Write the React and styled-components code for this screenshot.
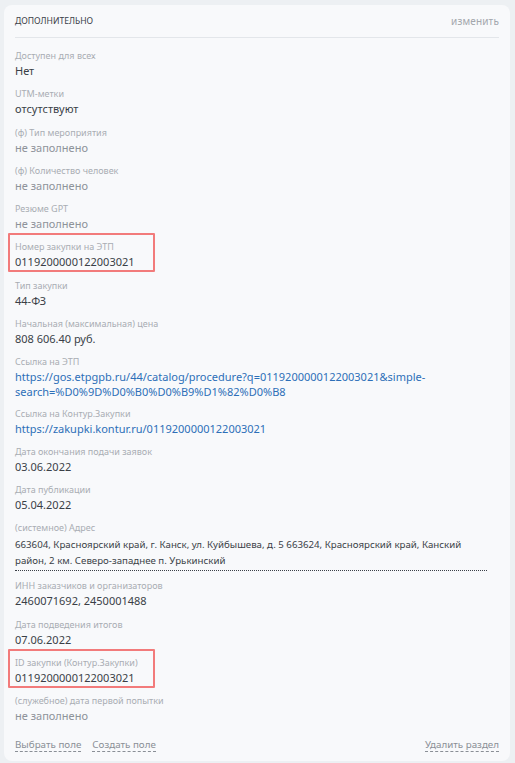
import React from "react";
import styled, { createGlobalStyle } from "styled-components";

const GlobalStyle = createGlobalStyle`
  html, body {
    margin: 0;
    padding: 0;
    background: #edf0f3;
    font-family: "Noto Sans", "Open Sans", sans-serif;
  }
`;

const Page = styled.div`
  padding: 5px 5px 3px 4px;
`;

const Card = styled.div`
  background: #f8f9fb;
  border-radius: 8px;
  padding: 0 11px 9px 11px;
`;

const Header = styled.div`
  display: flex;
  justify-content: space-between;
  align-items: center;
  height: 32px;
  border-bottom: 1px solid #e3e6ea;
`;

const Title = styled.div`
  font-size: 8.6px;
  color: #3c4149;
  text-transform: uppercase;
`;

const Edit = styled.div`
  font-size: 10px;
  color: #a3a7ad;
  letter-spacing: 0.15px;
`;

const List = styled.div`
  display: flex;
  flex-direction: column;
  gap: 8.25px;
  padding-top: 11px;
`;

const Row = styled.div`
  position: relative;
  display: flex;
  flex-direction: column;
  ${(p) =>
    p.$marked &&
    `
    &::after {
      content: "";
      position: absolute;
      left: -7px;
      top: -7px;
      width: 143px;
      height: 35px;
      border: 2px solid #f27b7b;
      border-radius: 1px;
    }
  `}
`;

const Label = styled.div`
  font-size: 9px;
  line-height: 14px;
  color: #a9adb3;
`;

const Value = styled.div`
  font-size: 11px;
  line-height: 16px;
  color: ${(p) => (p.$empty ? "#8e939a" : "#3a3f47")};
`;

const Link = styled.a`
  font-size: 11px;
  line-height: 15px;
  color: #2d6fb8;
  text-decoration: none;
  word-break: break-word;
`;

const Address = styled.div`
  width: 472px;
  font-size: 9.7px;
  line-height: 16px;
  color: #3a3f47;
  border-bottom: 1px dotted #3a3f47;
  margin-top: 2px;
  padding-bottom: 1px;
`;

const Footer = styled.div`
  display: flex;
  align-items: center;
  gap: 11px;
  padding-top: 14px;
`;

const Action = styled.span`
  font-size: 9.8px;
  color: #8a8f96;
  border-bottom: 1px dashed #8a8f96;
  line-height: 13px;
  ${(p) => p.$right && "margin-left: auto;"}
`;

const fields = [
  { label: "Доступен для всех", value: "Нет" },
  { label: "UTM-метки", value: "отсутствуют" },
  { label: "(ф) Тип мероприятия", empty: true },
  { label: "(ф) Количество человек", empty: true },
  { label: "Резюме GPT", empty: true },
  { label: "Номер закупки на ЭТП", value: "0119200000122003021", marked: true },
  { label: "Тип закупки", value: "44-ФЗ" },
  { label: "Начальная (максимальная) цена", value: "808 606.40 руб." },
  {
    label: "Ссылка на ЭТП",
    link: "https://gos.etpgpb.ru/44/catalog/procedure?q=0119200000122003021&simple-search=%D0%9D%D0%B0%D0%B9%D1%82%D0%B8",
  },
  {
    label: "Ссылка на Контур.Закупки",
    link: "https://zakupki.kontur.ru/0119200000122003021",
  },
  { label: "Дата окончания подачи заявок", value: "03.06.2022" },
  { label: "Дата публикации", value: "05.04.2022" },
  {
    label: "(системное) Адрес",
    address:
      "663604, Красноярский край, г. Канск, ул. Куйбышева, д. 5 663624, Красноярский край, Канский район, 2 км. Северо-западнее п. Урькинский",
  },
  { label: "ИНН заказчиков и организаторов", value: "2460071692, 2450001488" },
  { label: "Дата подведения итогов", value: "07.06.2022" },
  { label: "ID закупки (Контур.Закупки)", value: "0119200000122003021", marked: true },
  { label: "(служебное) дата первой попытки", empty: true },
];

const Field = ({ f }) => (
  <Row $marked={f.marked}>
    <Label>{f.label}</Label>
    {f.link ? (
      <Link href="#">{f.link}</Link>
    ) : f.address ? (
      <Address>{f.address}</Address>
    ) : f.empty ? (
      <Value $empty>не заполнено</Value>
    ) : (
      <Value>{f.value}</Value>
    )}
  </Row>
);

const App = () => {
  return (
    <Page>
      <GlobalStyle />
      <Card>
        <Header>
          <Title>Дополнительно</Title>
          <Edit>изменить</Edit>
        </Header>
        <List>
          {fields.map((f) => (
            <Field key={f.label} f={f} />
          ))}
        </List>
        <Footer>
          <Action>Выбрать поле</Action>
          <Action>Создать поле</Action>
          <Action $right>Удалить раздел</Action>
        </Footer>
      </Card>
    </Page>
  );
};

export default App;
